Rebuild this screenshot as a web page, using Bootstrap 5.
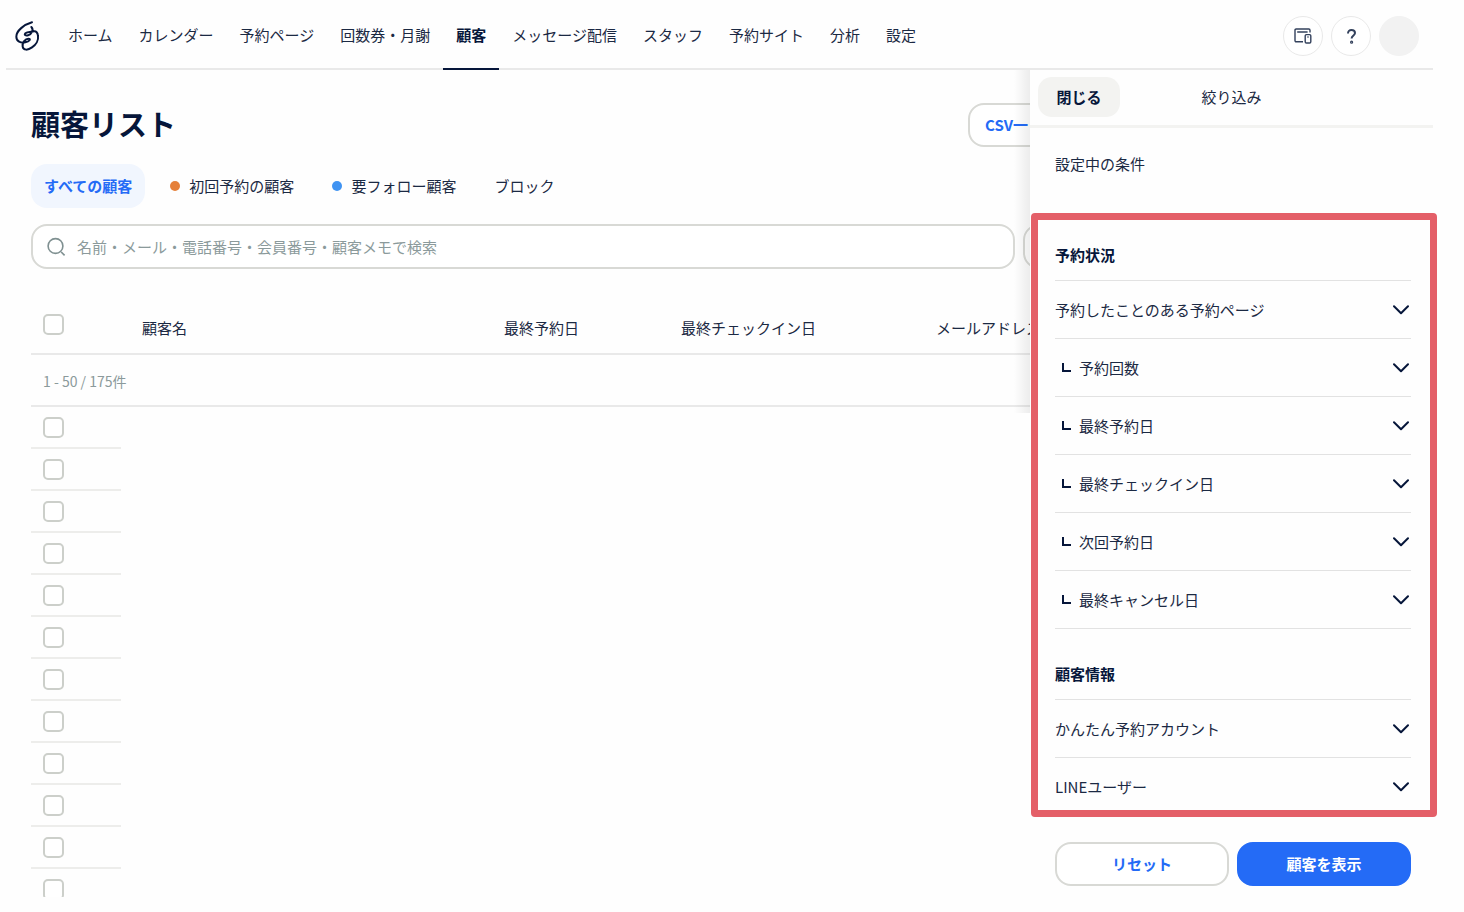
<!DOCTYPE html>
<html lang="ja">
<head>
<meta charset="utf-8">
<meta name="viewport" content="width=device-width, initial-scale=1">
<title>顧客リスト</title>
<link rel="stylesheet" href="https://cdn.jsdelivr.net/npm/bootstrap@5.3.0/dist/css/bootstrap.min.css">
<style>
  :root { --ink: #1b2943; --line: #e9e9e9; --edge: #d8d9d5; --blue: #246bf6; --mute: #8b9a9b; }
  body { font-family: "Noto Sans CJK JP", sans-serif; font-size: 15px; line-height: 24px; color: var(--ink); background: #fefefe; }
  button, input { font-size: 15px; line-height: 24px; color: inherit; }
  .shell { height: calc(100vh - 15px); margin: 0 31px 15px 6px; }
  .topbar { border-bottom: 2px solid var(--line); height: 70px; padding-right: 14px; }
  .brand { width: 43px; padding-left: 9px; padding-top: 4px; }
  .menu { margin-left: 6px; }
  .menu a { color: var(--ink); padding: 23px 13px 21px; margin-bottom: -2px; border-bottom: 2px solid transparent; text-decoration: none; white-space: nowrap; }
  .menu a.active { font-weight: 700; color: #06163a; border-color: #06163a; }
  .tools { padding-top: 4px; }
  .round { width: 40px; height: 40px; border: 1px solid var(--line); background: #fff; }
  .round.blank { background: #f2f2f2; border-color: #f2f2f2; }
  .content { padding: 33px 25px 0; }
  .title { font-size: 29px; line-height: 40px; font-weight: 700; color: #06163a; }
  .box-btn { height: 44px; border: 2px solid var(--edge); border-radius: 16px; background: #fff; color: var(--blue); font-weight: 700; }
  .csv { width: 440px; padding-left: 15px; }
  .tabs { gap: 12px; margin-top: 17px; }
  .tab { height: 44px; padding: 0 13px; border: 0; border-radius: 16px; background: none; gap: 9px; }
  .tab.on { background: #f1f6fe; color: var(--blue); font-weight: 700; }
  .dot { width: 10px; height: 10px; background: #e5803a; }
  .dot.sky { background: #3f93f2; }
  .search { height: 45px; border: 2px solid var(--edge); border-radius: 16px; padding-left: 13px; gap: 11px; background: #fff; }
  .search input { outline: 0; }
  .search input::placeholder { color: var(--mute); opacity: 1; }
  .narrow { width: 385px; height: 45px; }
  .people { width: 1420px; table-layout: fixed; border-collapse: separate; border-spacing: 0; }
  .people th, .people td { padding: 0 0 0 12px; font-weight: 400; }
  .people thead th { height: 86px; border-bottom: 2px solid var(--line); vertical-align: bottom; padding-bottom: 13px; }
  .people thead .pick { padding-bottom: 18px; }
  .people .who { padding-left: 21px; }
  .people .count { height: 52px; border-bottom: 2px solid var(--line); font-size: 14px; color: var(--mute); padding-top: 2px; }
  .people .slot { height: 42px; border-bottom: 2px solid #ededeb; }
  .tick { appearance: none; display: block; width: 21px; height: 21px; margin: 0; border: 2px solid #cccfca; border-radius: 5px; background: #fff; }
  .drawer { top: 70px; right: 0; bottom: 0; width: 403px; background: #fefefe; }
  .shade { right: 100%; top: 0; width: 16px; height: 343px; background: linear-gradient(to left, #00000012, #00000000); }
  .drawer-head { padding: 7px 8px 8px; border-bottom: 3px solid #f3f3f1; }
  .drawer-head button { width: 82px; height: 40px; border: 0; border-radius: 14px; background: #f3f3f1; color: #06163a; font-weight: 700; }
  .drawer-head .mid { padding-right: 82px; }
  .current { padding: 24px 25px 37px; }
  .frame { margin: 0 -4px 0 1px; border: 7px solid #e45f68; border-radius: 4px; padding: 0 19px 0 17px; min-height: 0; background: #fefefe; }
  .group { font-size: 15px; line-height: 24px; font-weight: 700; color: #06163a; padding: 23px 0 13px; border-bottom: 1px solid #e2e2e2; }
  .group.next { padding-top: 33px; }
  .fold { height: 58px; padding: 0 2px 0 0; border: 0; border-bottom: 1px solid #e2e2e2; background: none; text-align: left; }
  .fold.sub { padding-left: 7px; }
  .fold.sub span { margin-left: 8px; }
  .drawer-foot { padding: 25px 22px 11px 25px; }
  .drawer-foot .go { background: var(--blue); border-color: var(--blue); color: #fff; }
</style>
</head>
<body>
<svg class="d-none">
  <symbol id="chev" viewBox="0 0 16 10"><path d="M1 1.3 8 8.3 15 1.3" fill="none" stroke="#06163a" stroke-width="2" stroke-linecap="round" stroke-linejoin="round"/></symbol>
  <symbol id="ell" viewBox="0 0 9 9"><path d="M1 0V8H9" fill="none" stroke="#06163a" stroke-width="2"/></symbol>
</svg>
<div class="shell position-relative d-flex flex-column">
  <header class="topbar d-flex align-items-center flex-shrink-0">
    <a class="brand" href="#" aria-label="トップ">
      <svg width="25" height="30" viewBox="9 11 75 90" fill="none" stroke="#06163a" stroke-width="6" stroke-linecap="round" stroke-linejoin="round"><path d="M60 15C36 22 13 40 13 58C13 72 26 78 40 75C53 73 58 64 49 64C40 64 30 76 32 88C34 100 48 99 60 90C72 82 80 68 78 56C77 46 72 41 66 42C58 44 46 43 40 48C36 52 40 56 48 54C60 50 66 37 58 29"/></svg>
    </a>
    <nav class="menu d-flex" aria-label="メイン">
      <a href="#">ホーム</a><a href="#">カレンダー</a><a href="#">予約ページ</a><a href="#">回数券・月謝</a><a href="#" class="active" aria-current="page">顧客</a><a href="#">メッセージ配信</a><a href="#">スタッフ</a><a href="#">予約サイト</a><a href="#">分析</a><a href="#">設定</a>
    </nav>
    <div class="tools ms-auto d-flex gap-2">
      <button class="round rounded-circle d-flex align-items-center justify-content-center p-0" aria-label="端末">
        <svg width="18" height="16" viewBox="0 0 18 16" fill="none" stroke="#33415c" stroke-width="1.4" stroke-linejoin="round"><path d="M9 13.8H2.2Q1 13.8 1 12.6V2.2Q1 1 2.2 1H14.8Q16 1 16 2.2V4.6M3.2 4H13.6"/><rect x="11.2" y="6.6" width="5.6" height="8.4" rx="1.2"/><path d="M13.4 9H14.6"/></svg>
      </button>
      <button class="round rounded-circle d-flex align-items-center justify-content-center p-0" aria-label="ヘルプ">
        <svg width="9" height="15" viewBox="0 0 9 15" fill="none" stroke="#33415c" stroke-width="2"><path d="M1 4.4C1 2.2 2.4 1 4.4 1S8 2.2 8 4.1C8 6.6 4.6 6.4 4.6 9.6"/><circle cx="4.6" cy="13.2" r=".6"/></svg>
      </button>
      <button class="round blank rounded-circle p-0" aria-label="アカウント"></button>
    </div>
  </header>

  <main class="content flex-fill overflow-hidden">
    <div class="d-flex justify-content-between">
      <h1 class="title m-0">顧客リスト</h1>
      <button class="box-btn csv text-start">CSV一</button>
    </div>
    <div class="tabs d-flex">
      <button class="tab on">すべての顧客</button>
      <button class="tab d-flex align-items-center"><i class="dot rounded-circle"></i>初回予約の顧客</button>
      <button class="tab d-flex align-items-center"><i class="dot sky rounded-circle"></i>要フォロー顧客</button>
      <button class="tab">ブロック</button>
    </div>
    <div class="d-flex gap-2 mt-3">
      <label class="search d-flex align-items-center flex-fill">
        <svg width="20" height="20" viewBox="0 0 20 20" fill="none" stroke="#7f9091" stroke-width="1.6"><circle cx="9.5" cy="9" r="7.4"/><path d="M15.2 15 18.6 18.4"/></svg>
        <input class="border-0 bg-transparent p-0 flex-fill" type="search" aria-label="検索" placeholder="名前・メール・電話番号・会員番号・顧客メモで検索">
      </label>
      <button class="box-btn narrow" aria-label="絞り込み"></button>
    </div>
    <table class="people">
      <colgroup><col style="width:90px"><col style="width:371px"><col style="width:177px"><col style="width:255px"><col></colgroup>
      <thead>
        <tr><th class="pick"><input class="tick" type="checkbox" aria-label="すべて選択"></th><th class="who">顧客名</th><th>最終予約日</th><th>最終チェックイン日</th><th>メールアドレス</th></tr>
      </thead>
      <tbody>
        <tr><td class="count" colspan="5">1 - 50 / 175件</td></tr>
        <tr><td class="slot"><input class="tick" type="checkbox" aria-label="顧客1"></td><td colspan="4"></td></tr>
        <tr><td class="slot"><input class="tick" type="checkbox" aria-label="顧客2"></td><td colspan="4"></td></tr>
        <tr><td class="slot"><input class="tick" type="checkbox" aria-label="顧客3"></td><td colspan="4"></td></tr>
        <tr><td class="slot"><input class="tick" type="checkbox" aria-label="顧客4"></td><td colspan="4"></td></tr>
        <tr><td class="slot"><input class="tick" type="checkbox" aria-label="顧客5"></td><td colspan="4"></td></tr>
        <tr><td class="slot"><input class="tick" type="checkbox" aria-label="顧客6"></td><td colspan="4"></td></tr>
        <tr><td class="slot"><input class="tick" type="checkbox" aria-label="顧客7"></td><td colspan="4"></td></tr>
        <tr><td class="slot"><input class="tick" type="checkbox" aria-label="顧客8"></td><td colspan="4"></td></tr>
        <tr><td class="slot"><input class="tick" type="checkbox" aria-label="顧客9"></td><td colspan="4"></td></tr>
        <tr><td class="slot"><input class="tick" type="checkbox" aria-label="顧客10"></td><td colspan="4"></td></tr>
        <tr><td class="slot"><input class="tick" type="checkbox" aria-label="顧客11"></td><td colspan="4"></td></tr>
        <tr><td class="slot"><input class="tick" type="checkbox" aria-label="顧客12"></td><td colspan="4"></td></tr>
      </tbody>
    </table>
  </main>

  <!-- filter drawer, lies over the list -->
  <aside class="drawer position-absolute d-flex flex-column">
    <div class="shade position-absolute"></div>
    <div class="drawer-head d-flex align-items-center">
      <button>閉じる</button>
      <div class="mid flex-fill text-center">絞り込み</div>
    </div>
    <div class="current">設定中の条件</div>
    <div class="frame flex-fill overflow-hidden">
      <h2 class="group m-0">予約状況</h2>
      <button class="fold w-100 d-flex align-items-center">予約したことのある予約ページ<svg class="ms-auto" width="16" height="10"><use href="#chev"/></svg></button>
      <button class="fold sub w-100 d-flex align-items-center"><svg width="9" height="9"><use href="#ell"/></svg><span>予約回数</span><svg class="ms-auto" width="16" height="10"><use href="#chev"/></svg></button>
      <button class="fold sub w-100 d-flex align-items-center"><svg width="9" height="9"><use href="#ell"/></svg><span>最終予約日</span><svg class="ms-auto" width="16" height="10"><use href="#chev"/></svg></button>
      <button class="fold sub w-100 d-flex align-items-center"><svg width="9" height="9"><use href="#ell"/></svg><span>最終チェックイン日</span><svg class="ms-auto" width="16" height="10"><use href="#chev"/></svg></button>
      <button class="fold sub w-100 d-flex align-items-center"><svg width="9" height="9"><use href="#ell"/></svg><span>次回予約日</span><svg class="ms-auto" width="16" height="10"><use href="#chev"/></svg></button>
      <button class="fold sub w-100 d-flex align-items-center"><svg width="9" height="9"><use href="#ell"/></svg><span>最終キャンセル日</span><svg class="ms-auto" width="16" height="10"><use href="#chev"/></svg></button>
      <h2 class="group next m-0">顧客情報</h2>
      <button class="fold w-100 d-flex align-items-center">かんたん予約アカウント<svg class="ms-auto" width="16" height="10"><use href="#chev"/></svg></button>
      <button class="fold w-100 d-flex align-items-center">LINEユーザー<svg class="ms-auto" width="16" height="10"><use href="#chev"/></svg></button>
    </div>
    <div class="drawer-foot d-flex gap-2">
      <button class="box-btn w-50">リセット</button>
      <button class="box-btn go w-50">顧客を表示</button>
    </div>
  </aside>
</div>
<script src="https://cdn.jsdelivr.net/npm/bootstrap@5.3.0/dist/js/bootstrap.bundle.min.js"></script>
</body>
</html>
